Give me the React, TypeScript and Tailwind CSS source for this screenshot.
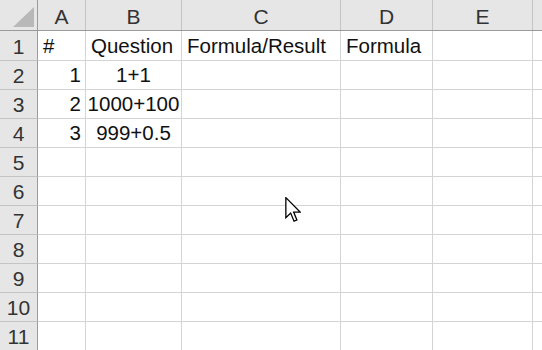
const cols = ['A', 'B', 'C', 'D', 'E', ''];

type Cell = { text: string; align?: 'left' | 'right' | 'center' };

const rows: Cell[][] = [
    [{ text: '#' }, { text: 'Question' }, { text: 'Formula/Result' }, { text: 'Formula' }, { text: '' }, { text: '' }],
    [{ text: '1', align: 'right' }, { text: '1+1', align: 'center' }],
    [{ text: '2', align: 'right' }, { text: '1000+100', align: 'center' }],
    [{ text: '3', align: 'right' }, { text: '999+0.5', align: 'center' }],
];

const gridCols = 'grid grid-cols-[38px_48px_96px_159px_92px_100px_1fr]';
const alignClass = {
    left: 'justify-start pl-[5px]',
    right: 'justify-end pr-[4px]',
    center: 'justify-center',
};

export default function App() {
    return (
        <div
            className="relative w-[542px] h-[350px] overflow-hidden bg-white text-[#111] leading-none select-none"
            style={{ fontFamily: '"Liberation Sans", Arial, sans-serif' }}
        >
            {/* Column headers */}
            <div className={`${gridCols} h-[31px] bg-[#e6e6e6] border-b border-[#9b9b9b]`}>
                <div className="relative border-r border-[#9b9b9b]">
                    <div className="absolute left-[13px] top-[7px] w-[21px] h-[20px] bg-[#b8b8b8] [clip-path:polygon(100%_0,100%_100%,0_100%)]" />
                </div>
                {cols.map((c, i) => (
                    <div
                        key={i}
                        className={`flex items-center justify-center text-[21px] leading-none text-[#333] pt-[2px] ${i < cols.length - 1 ? 'border-r border-[#c4c4c4]' : ''}`}
                    >
                        {c}
                    </div>
                ))}
            </div>

            {/* Rows */}
            {Array.from({ length: 11 }).map((_, r) => {
                const data = rows[r] || [];
                return (
                    <div key={r} className={`${gridCols} overflow-hidden ${r === 0 ? 'h-[30px]' : 'h-[29px]'}`}>
                        <div className="flex items-center justify-center bg-[#e6e6e6] border-r border-[#9b9b9b] border-b border-b-[#c4c4c4] text-[21px] leading-none text-[#333] pt-[1px]">
                            {r + 1}
                        </div>
                        {cols.map((_, ci) => {
                            const cell = data[ci];
                            return (
                                <div
                                    key={ci}
                                    className={`flex items-center text-[20.5px] leading-none whitespace-nowrap pt-[1px] border-b border-[#d4d4d4] ${ci < cols.length - 1 ? 'border-r' : ''} ${alignClass[cell?.align || 'left']}`}
                                >
                                    {cell?.text}
                                </div>
                            );
                        })}
                    </div>
                );
            })}

            {/* Mouse pointer */}
            <svg className="absolute left-[285px] top-[197px]" width="16" height="26" viewBox="0 0 12 20">
                <path
                    d="M0.5 0.5 L0.5 16 L4.2 12.4 L6.8 18.6 L9 17.7 L6.5 11.6 L11.5 11.6 Z"
                    fill="#fff"
                    stroke="#000"
                    strokeWidth="1"
                    strokeLinejoin="miter"
                />
            </svg>
        </div>
    );
}
